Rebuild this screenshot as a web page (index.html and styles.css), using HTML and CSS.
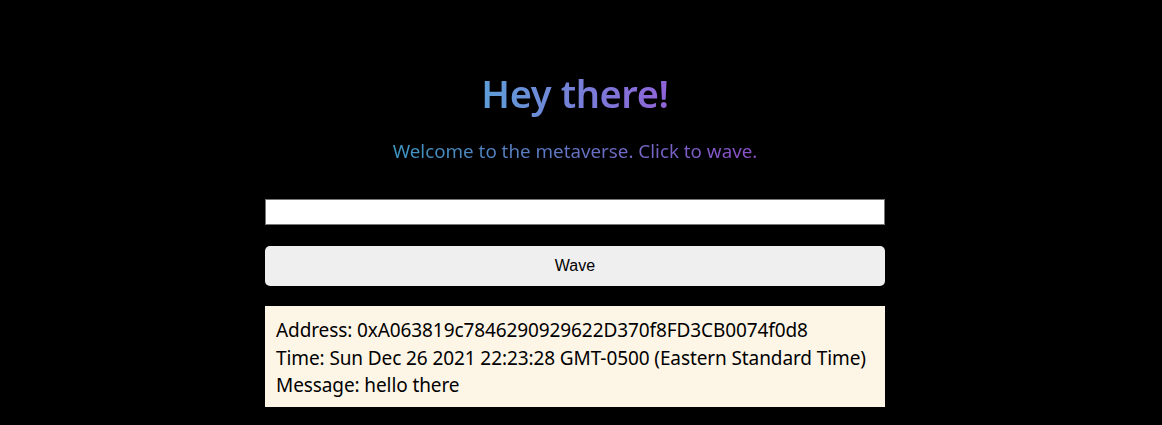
FILE: index.html
```html
<!DOCTYPE html>
<html>
<head>
<meta charset="utf-8">
<link rel="stylesheet" href="styles.css">
</head>
<body>
<main class="main">
  <div class="container">
    <h1 class="header">Hey there!</h1>
    <p class="bio">Welcome to the metaverse. Click to wave.</p>
    <input class="message-input" type="text">
    <button class="wave-button">Wave</button>
    <div class="wave-card">
      <div>Address: 0xA063819c7846290929622D370f8FD3CB0074f0d8</div>
      <div>Time: Sun Dec 26 2021 22:23:28 GMT-0500 (Eastern Standard Time)</div>
      <div>Message: hello there</div>
    </div>
  </div>
</main>
</body>
</html>
```
FILE: styles.css
```css
html, body {
  margin: 0;
  padding: 0;
  background: #000;
  height: 100%;
}
.main {
  display: flex;
  justify-content: center;
  padding-top: 65px;
  padding-right: 12px;
}
.container {
  width: 620px;
  display: flex;
  flex-direction: column;
  font-family: "Noto Sans", "Open Sans", sans-serif;
}
.header {
  margin: 0;
  text-align: center;
  font-size: 38px;
  font-weight: 600;
  letter-spacing: -0.4px;
  line-height: 56px;
  background: linear-gradient(to right, #5d9ed8, #8f63d8);
  -webkit-background-clip: text;
  background-clip: text;
  color: transparent;
  align-self: center;
}
.bio {
  margin: 18px 0 0;
  text-align: center;
  font-size: 18.8px;
  line-height: 24px;
  background: linear-gradient(to right, #3d96bf, #8c50c8);
  -webkit-background-clip: text;
  background-clip: text;
  color: transparent;
  align-self: center;
}
.message-input {
  margin: 36px 0 0;
  height: 26px;
  box-sizing: border-box;
  border: 1px solid #767676;
  background: #fff;
  padding: 0 4px;
}
.wave-button {
  margin-top: 21px;
  height: 40px;
  border: 0;
  border-radius: 5px;
  background: #efefef;
  font-family: "Liberation Sans", Arial, sans-serif;
  font-size: 16px;
  color: #000;
  cursor: pointer;
}
.wave-card {
  margin-top: 20px;
  background: #fdf5e6;
  padding: 11px 11px 7px;
  font-size: 19px;
  letter-spacing: -0.1px;
  line-height: 27.6px;
  color: #000;
}
```
